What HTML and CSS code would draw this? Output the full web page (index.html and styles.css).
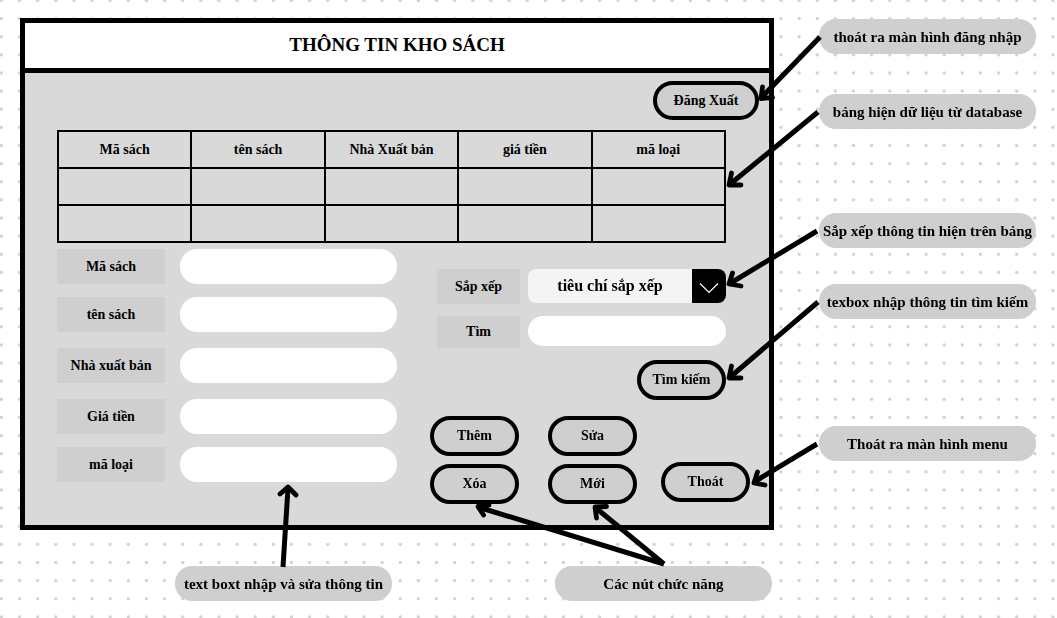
FILE: index.html
```html
<!DOCTYPE html>
<html lang="vi">
<head>
<meta charset="utf-8">
<meta name="viewport" content="width=device-width, initial-scale=1">
<title>Thông tin kho sách</title>
<link rel="stylesheet" href="styles.css">
</head>
<body>
<svg class="dots" aria-hidden="true">
  <defs>
    <pattern id="dot" x="-7.6" y="-8.6" width="18.13" height="18.13" patternUnits="userSpaceOnUse">
      <circle cx="9" cy="9" r="1.7" fill="#cbd2db"/>
    </pattern>
  </defs>
  <rect width="100%" height="100%" fill="url(#dot)"/>
</svg>
<div class="board">
  <main class="window">
    <h1 class="title">THÔNG TIN KHO SÁCH</h1>
    <div class="toolbar">
      <button class="btn btn-wide" type="button">Đăng Xuất</button>
    </div>
    <div class="content">
      <table class="books">
        <thead>
          <tr><th>Mã sách</th><th>tên sách</th><th>Nhà Xuất bản</th><th>giá tiền</th><th>mã loại</th></tr>
        </thead>
        <tbody>
          <tr><td></td><td></td><td></td><td></td><td></td></tr>
          <tr><td></td><td></td><td></td><td></td><td></td></tr>
        </tbody>
      </table>
      <div class="panels">
        <form class="details">
          <div class="field"><label class="tag" for="ma">Mã sách</label><input class="box" id="ma" type="text"></div>
          <div class="details-group">
            <div class="field"><label class="tag" for="ten">tên sách</label><input class="box" id="ten" type="text"></div>
            <div class="field"><label class="tag" for="nxb">Nhà xuất bản</label><input class="box" id="nxb" type="text"></div>
            <div class="field"><label class="tag" for="gia">Giá tiền</label><input class="box" id="gia" type="text"></div>
          </div>
          <div class="field"><label class="tag" for="loai">mã loại</label><input class="box" id="loai" type="text"></div>
        </form>
        <div class="tools">
          <div class="tool-row">
            <label class="tag" for="sort">Sắp xếp</label>
            <div class="select">
              <select class="select-input" id="sort"><option>tiêu chí sắp xếp</option></select>
              <span class="select-arrow">
                <svg width="20" height="12" viewBox="0 0 20 12" fill="none" stroke="#fff" stroke-width="1.2" aria-hidden="true"><path d="M1 1.5 10 10.5 19 1.5"/></svg>
              </span>
            </div>
          </div>
          <div class="tool-row">
            <label class="tag tag-short" for="find">Tìm</label>
            <input class="box box-short" id="find" type="text">
          </div>
          <button class="btn search" type="button">Tìm kiếm</button>
          <div class="actions">
            <div class="action-grid">
              <button class="btn" type="button">Thêm</button>
              <button class="btn" type="button">Sửa</button>
              <button class="btn" type="button">Xóa</button>
              <button class="btn" type="button">Mới</button>
            </div>
            <button class="btn exit" type="button">Thoát</button>
          </div>
        </div>
      </div>
    </div>
  </main>
  <aside class="side-notes">
    <p class="note">thoát ra màn hình đăng nhập</p>
    <p class="note">bảng hiện dữ liệu từ database</p>
    <p class="note">Sắp xếp thông tin hiện trên bảng</p>
    <p class="note">texbox nhập thông tin tìm kiếm</p>
    <p class="note">Thoát ra màn hình menu</p>
  </aside>
  <div class="bottom-notes">
    <p class="note note-inputs">text boxt nhập và sửa thông tin</p>
    <p class="note note-actions">Các nút chức năng</p>
  </div>
  <svg class="arrows" viewBox="0 0 1057 618" preserveAspectRatio="none" fill="none" stroke="#000" stroke-width="5" stroke-linejoin="round" aria-hidden="true">
    <path d="M820 37 761 98M818 112 729 185M817 231 729 284M818 302 729 378M817 444 754 482M283 567 288 488M664 564 478 507M664 564 596 508"/>
    <path stroke-width="4.8" stroke-linecap="round" d="M762.500 87 761 98.500 772.500 97.500M731.500 173 729 185 741 185M732.500 273 729 284 741 286M731.500 366 729 378 741 378M757.500 472 754 483 765 485M280 494 288 487 296 495M489 505 478 506.500 483.500 515M606.500 506.500 595 507 596.500 518"/>
  </svg>
</div>
</body>
</html>
```

FILE: styles.css
```css
* { box-sizing: border-box; }

body {
  margin: 0;
  background: #fff;
  color: #000;
  font: bold 14px/20px "Liberation Serif", "Times New Roman", serif;
}

button, input, select { font: inherit; color: inherit; margin: 0; }
p, h1 { margin: 0; }

.dots {
  position: fixed;
  inset: 0;
  width: 100%;
  height: 100%;
  z-index: -1;
}

.board {
  position: relative;
  display: grid;
  grid-template-columns: minmax(0, 754fr) minmax(0, 217fr);
  column-gap: 45px;
  row-gap: 36px;
  padding: 18px 21px 17px 20px;
}

.arrows {
  position: absolute;
  inset: 0;
  width: 100%;
  height: 100%;
  pointer-events: none;
}

/* Window */
.window {
  border: 5px solid #000;
  background: #d9d9d9;
}

.title {
  padding: 10px 0 11px;
  border-bottom: 5px solid #000;
  background: #fff;
  font-size: 19px;
  line-height: 24px;
  text-align: center;
}

.toolbar {
  display: flex;
  justify-content: flex-end;
  padding: 8px 10px 10px;
}

.content { padding: 0 43px 21px 32px; }

.books {
  width: 100%;
  table-layout: fixed;
  border-collapse: collapse;
}

.books th, .books td {
  height: 37px;
  padding: 0;
  border: 2px solid #000;
  text-align: center;
}

.panels {
  display: grid;
  grid-template-columns: minmax(0, 340fr) minmax(0, 289fr);
  column-gap: 40px;
  padding-top: 6px;
}

.details, .details-group {
  display: flex;
  flex-direction: column;
}

.details { gap: 13px; }
.details-group { gap: 16px; }

.field {
  display: grid;
  grid-template-columns: 108px minmax(0, 1fr);
  gap: 15px;
}

.tag {
  display: flex;
  align-items: center;
  justify-content: center;
  height: 35px;
  background: #cfcfcf;
}

.tag-short { height: 32px; }

.box {
  width: 100%;
  height: 35px;
  padding: 0 16px;
  border: 0;
  border-radius: 17px;
  background: #fff;
}

.box-short { height: 30px; border-radius: 15px; }

.tools {
  display: flex;
  flex-direction: column;
  padding-top: 20px;
}

.tool-row {
  display: grid;
  grid-template-columns: 83px minmax(0, 1fr);
  column-gap: 8px;
  align-items: start;
  margin-bottom: 12px;
}

.select {
  position: relative;
  height: 34px;
  border-radius: 8px;
  overflow: hidden;
}

.select-input {
  appearance: none;
  width: 100%;
  height: 100%;
  padding: 0 34px 0 0;
  border: 0;
  background: #f4f4f4;
  font-size: 16px;
  text-align: center;
  text-align-last: center;
}

.select-arrow {
  position: absolute;
  inset: 0 0 0 auto;
  display: flex;
  align-items: center;
  justify-content: center;
  width: 34px;
  padding-top: 4px;
  background: #000;
  pointer-events: none;
}

.btn {
  min-width: 89px;
  height: 40px;
  padding: 0;
  border: 4px solid #000;
  border-radius: 20px;
  background: #cfcfcf;
}

.btn-wide { min-width: 106px; height: 39px; }

.search { align-self: flex-end; }

.actions {
  display: flex;
  align-items: flex-end;
  justify-content: space-between;
  margin: 16px -24px 0 -7px;
}

.action-grid {
  display: grid;
  grid-template-columns: auto auto;
  gap: 8px 29px;
}

.exit { margin-bottom: 2px; }

/* Notes */
.note {
  display: flex;
  align-items: center;
  justify-content: center;
  height: 35px;
  border-radius: 17px;
  background: #cfcfcf;
  font-size: 15px;
  white-space: nowrap;
}

.side-notes {
  display: grid;
  grid-template-rows: 75px 119px 71px 142px 35px;
  align-items: start;
  align-content: start;
  padding-top: 1px;
}

.bottom-notes {
  display: grid;
  grid-template-columns: 155fr 217fr 163fr 217fr 2fr;
}

.note-inputs { grid-column: 2; }
.note-actions { grid-column: 4; }
```
